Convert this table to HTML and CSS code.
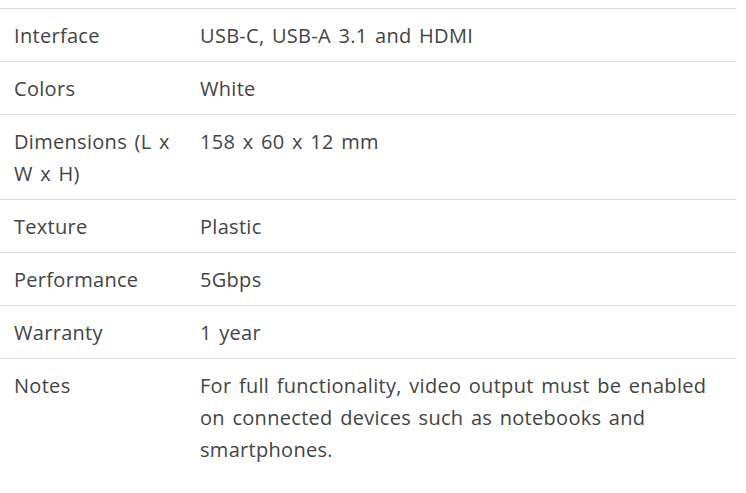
FILE: index.html
```html
<!DOCTYPE html>
<html>
<head>
<meta charset="utf-8">
<link rel="stylesheet" href="styles.css">
</head>
<body>
<table class="specs">
  <tbody>
    <tr><th>Interface</th><td>USB-C, USB-A 3.1 and HDMI</td></tr>
    <tr><th>Colors</th><td>White</td></tr>
    <tr><th>Dimensions (L x W x H)</th><td>158 x 60 x 12 mm</td></tr>
    <tr><th>Texture</th><td>Plastic</td></tr>
    <tr><th>Performance</th><td>5Gbps</td></tr>
    <tr><th>Warranty</th><td>1 year</td></tr>
    <tr><th>Notes</th><td>For full functionality, video output must be enabled on connected devices such as notebooks and smartphones.</td></tr>
  </tbody>
</table>
</body>
</html>
```

FILE: styles.css
```css
html, body {
  margin: 0;
  background: #fff;
}
body {
  padding-top: 8px;
  font-family: "Open Sans", "Noto Sans", sans-serif;
  font-size: 20px;
  letter-spacing: 0.3px;
  word-spacing: 2px;
  color: #444;
}
.specs {
  width: 736px;
  border-collapse: collapse;
}
.specs tr {
  border-top: 1px solid #dcdcdc;
}
.specs th, .specs td {
  text-align: left;
  vertical-align: top;
  font-weight: normal;
  line-height: 32px;
  padding: 11px 14px 9px 14px;
}
.specs th {
  width: 158px;
}
.specs td {
  padding-left: 14px;
  padding-right: 20px;
}
```
